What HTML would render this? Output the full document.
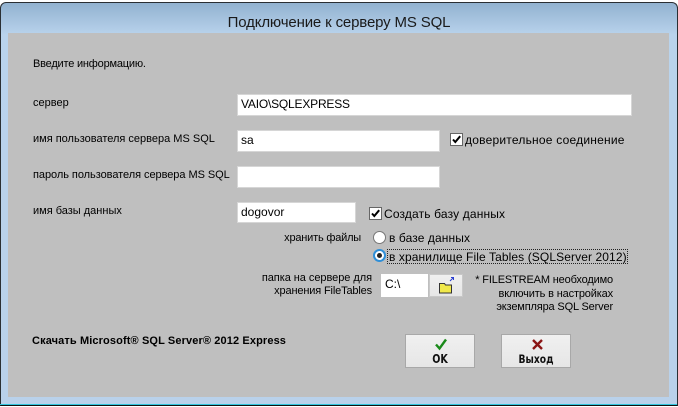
<!DOCTYPE html>
<html><head><meta charset="utf-8"><style>
html,body{margin:0;padding:0;background:#fff}
#w{position:relative;width:678px;height:407px;overflow:hidden;background:#fff;font-family:"Liberation Sans",sans-serif;color:#111}
#frame{position:absolute;left:0;top:2px;width:676px;height:402px;border:1px solid #2a2f33;border-bottom:1px solid #111;border-radius:6px 6px 0 0;background:linear-gradient(#92b2d0 0,#b9d3ec 32px,#b9d1ea 100%);box-sizing:content-box}
#cy{position:absolute;left:0;top:404px;width:677px;height:1px;background:#2fc4dc}
#b{position:absolute;left:8px;top:33px;width:661px;height:364px;background:#bfbfbf}
.t{position:absolute;font-size:12px;line-height:14px;white-space:nowrap;color:#000}
.r{text-align:right}
.s{font-size:11px}
.i{position:absolute;background:#fff;box-sizing:border-box;border:1px solid #d6d6d6;font-size:12px;line-height:19px;padding-left:3px;color:#000}
.c{position:absolute;width:13px;height:13px;background:#fff;border:1px solid #666;box-sizing:border-box}
.c svg{position:absolute;left:0;top:0}
.rd{position:absolute;width:13px;height:13px;border-radius:50%;background:#fff;border:1px solid #777;box-sizing:border-box}
.btn{position:absolute;background:linear-gradient(#f0f0f0,#e6e6e6);border:1px solid #a8a8a8;box-sizing:border-box}
.bl{position:absolute;left:0;right:0;top:18px;text-align:center;font-family:"DejaVu Sans","Liberation Sans",sans-serif;font-weight:bold;font-size:12px;line-height:13px;color:#111;transform:scaleX(.8)}
</style></head><body><div id="w">
<div id="frame"></div><div id="cy"></div>
<div style="position:absolute;left:0;top:14px;text-align:center;font-size:15px;line-height:18px;color:#1a1a1a;width:678px;letter-spacing:-.15px">Подключение к серверу MS SQL</div>
<div id="b"></div>

<div class="t s" style="left:33px;top:57px;letter-spacing:-.2px">Введите информацию.</div>
<div class="t s" style="left:33px;top:96px">сервер</div>
<div class="t s" style="left:33px;top:132px">имя пользователя сервера MS SQL</div>
<div class="t s" style="left:33px;top:168px;letter-spacing:-.05px">пароль пользователя сервера MS SQL</div>
<div class="t s" style="left:33px;top:204px">имя базы данных</div>

<div class="i" style="left:237px;top:94px;width:395px;height:22px;letter-spacing:-.2px">VAIO\SQLEXPRESS</div>
<div class="i" style="left:237px;top:130px;width:203px;height:22px">sa</div>
<div class="i" style="left:237px;top:166px;width:203px;height:22px"></div>
<div class="i" style="left:237px;top:202px;width:119px;height:21px">dogovor</div>

<div class="c" style="left:450px;top:133px"><svg width="11" height="11" viewBox="0 0 11 11"><path d="M2 5.5L4.3 8L9.2 2.2" fill="none" stroke="#000" stroke-width="2"/></svg></div>
<div class="t" style="left:465px;top:133px;letter-spacing:.22px">доверительное соединение</div>
<div class="c" style="left:369px;top:207px"><svg width="11" height="11" viewBox="0 0 11 11"><path d="M2 5.5L4.3 8L9.2 2.2" fill="none" stroke="#000" stroke-width="2"/></svg></div>
<div class="t" style="left:384px;top:207px;letter-spacing:.15px">Создать базу данных</div>

<div class="t r s" style="right:317px;top:231px;letter-spacing:-.2px">хранить файлы</div>
<div class="rd" style="left:373px;top:231px"></div>
<div class="t" style="left:389px;top:231px;letter-spacing:.1px">в базе данных</div>
<div class="rd" style="left:373px;top:249px;border:2px solid #2f8fd8;"><div style="position:absolute;left:2px;top:2px;width:5px;height:5px;border-radius:50%;background:#222"></div></div>
<div style="position:absolute;left:387px;top:249px;width:241px;height:15px;border:1px dotted #222;box-sizing:border-box"></div>
<div class="t" style="left:389px;top:250px;letter-spacing:.1px">в хранилище File Tables (SQLServer 2012)</div>

<div class="t r s" style="right:306px;top:271px;letter-spacing:-.05px">папка на сервере для</div>
<div class="t r s" style="right:306px;top:284px;letter-spacing:-.15px">хранения FileTables</div>
<div class="i" style="left:381px;top:274px;width:47px;height:23px;line-height:21px;padding-left:4px;border:none">C:\</div>
<div class="btn" style="left:429px;top:274px;width:34px;height:23px;border-color:#c8c8c8"><svg style="position:absolute;left:8px;top:1px" width="17" height="19" viewBox="0 0 17 19"><path d="M1.5 7.5h5l1 1.5h6v8h-12z" fill="#f0e84a" stroke="#333" stroke-width="1"/><path d="M12 5L15 2M13 1.5h2.5v2.5" fill="none" stroke="#2a3fd0" stroke-width="1"/></svg></div>

<div class="t r s" style="right:65px;top:274px;letter-spacing:-.15px;line-height:13.5px">* FILESTREAM необходимо<br>включить в настройках<br>экземпляра SQL Server</div>

<div class="t s" style="left:32px;top:334px;font-weight:bold;letter-spacing:.12px">Скачать Microsoft® SQL Server® 2012 Express</div>

<div class="btn" style="left:405px;top:334px;width:70px;height:34px"><svg style="position:absolute;left:28px;top:3px" width="14" height="13" viewBox="0 0 14 13"><path d="M2 6.5L5.5 10.5L12 1.5" fill="none" stroke="#1a8a1a" stroke-width="2.4"/></svg><div class="bl">OK</div></div>
<div class="btn" style="left:501px;top:334px;width:70px;height:34px"><svg style="position:absolute;left:29px;top:3px" width="13" height="13" viewBox="0 0 13 13"><path d="M2 2L11 11M11 2L2 11" fill="none" stroke="#8a1414" stroke-width="2.4"/></svg><div class="bl" style="font-size:11.5px">Выход</div></div>
</div></body></html>
